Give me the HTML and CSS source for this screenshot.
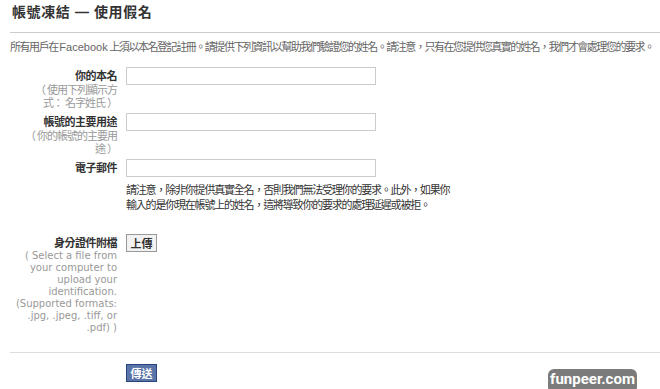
FILE: index.html
```
<!DOCTYPE html>
<html lang="zh-Hant">
  <head>
    <meta charset="UTF-8" />
    <title>帳號凍結 — 使用假名</title>
    <link rel="stylesheet" href="styles.css">
  </head>
  <body>
    <div class="page">
      <h1 class="title">帳號凍結 — 使用假名</h1>
      <p class="intro">所有用戶在 <span class="latin">Facebook</span> 上須以本名登記註冊。請提供下列資訊以幫助我們驗證您的姓名。請注意，只有在您提供您真實的姓名，我們才會處理您的要求。</p>

      <div class="form">
        <div class="row">
          <label class="label" for="name">你的本名<span class="hint">（ 使用下列顯示方式： 名字姓氏 ）</span></label>
          <input class="text" type="text" id="name" />
        </div>
        <div class="row">
          <label class="label" for="use">帳號的主要用途<span class="hint">（ 你的帳號的主要用途 ）</span></label>
          <input class="text" type="text" id="use" />
        </div>
        <div class="row">
          <label class="label" for="email">電子郵件</label>
          <input class="text" type="text" id="email" />
        </div>
        <div class="row">
          <div class="label"></div>
          <p class="note">請注意，除非你提供真實全名，否則我們無法受理你的要求。此外，如果你輸入的是你現在帳號上的姓名，這將導致你的要求的處理延遲或被拒。</p>
        </div>
        <div class="row upload-row">
          <label class="label">身分證件附檔<span class="hint hint-en">( Select a file from your computer to upload your identification. (Supported formats: .jpg, .jpeg, .tiff, or .pdf) )</span></label>
          <div><button class="upload">上傳</button></div>
        </div>
      </div>

      <div class="actions">
        <button class="submit">傳送</button>
      </div>

      <span class="watermark">funpeer.com</span>
    </div>
  </body>
</html>
```

FILE: styles.css
```
body {
  margin: 0;
  background: #fff;
  font-family: "Liberation Sans", "Noto Sans CJK TC", sans-serif;
  font-size: 11px;
  color: #333;
}

.page {
  position: relative;
  height: 389px;
  overflow: hidden;
  padding-left: 10px;
}

.title {
  margin: 0;
  padding: 3px 0 10px 2px;
  font-size: 14px;
  line-height: 19px;
  font-weight: bold;
  color: #333;
  letter-spacing: 0.6px;
  border-bottom: 1px solid #ccc;
}

.intro {
  margin: 8px 0 0;
  line-height: 12px;
  color: #666;
  letter-spacing: -1.45px;
  white-space: nowrap;
}

.latin {
  letter-spacing: 0;
}

.form {
  margin-top: 14px;
  display: grid;
  row-gap: 3px;
}

.row {
  display: grid;
  grid-template-columns: 107px 1fr;
  column-gap: 9px;
  align-items: start;
}

.label {
  padding-top: 3px;
  line-height: 13px;
  text-align: right;
  font-weight: bold;
  color: #333;
  letter-spacing: -0.5px;
}

.hint {
  display: block;
  margin-top: 1px;
  padding-left: 10px;
  font-weight: normal;
  color: #999;
  letter-spacing: -1px;
}

.hint-en {
  margin-top: 0;
  padding-left: 0;
  font-family: "DejaVu Sans", sans-serif;
  font-size: 10px;
  line-height: 12px;
  letter-spacing: 0;
}

.text {
  box-sizing: border-box;
  width: 250px;
  height: 18px;
  margin: 0;
  border: 1px solid #ccc;
  background: #fff;
}

.note {
  margin: 3px 0 0;
  width: 330px;
  line-height: 15px;
  color: #333;
  letter-spacing: -1.2px;
}

.upload-row {
  margin-top: 18px;
}

.upload {
  height: 18px;
  width: 31px;
  padding: 0;
  border: 1px solid #999;
  background: #f2f2f2;
  font-family: inherit;
  font-size: 11px;
  font-weight: bold;
  color: #333;
}

.actions {
  margin-top: 18px;
  border-top: 1px solid #ddd;
  padding: 11px 0 0 116px;
}

.submit {
  height: 18px;
  width: 31px;
  padding: 0;
  border: 1px solid #29447e;
  background: #5b74a8;
  font-family: inherit;
  font-size: 11px;
  font-weight: bold;
  color: #fff;
}

.watermark {
  position: absolute;
  left: 548px;
  top: 369px;
  width: 89px;
  height: 24px;
  border-radius: 6px;
  background: #7b7b7b;
  color: #fff;
  font-family: Roboto, sans-serif;
  font-size: 15px;
  font-weight: bold;
  line-height: 20px;
  text-align: center;
}
```
